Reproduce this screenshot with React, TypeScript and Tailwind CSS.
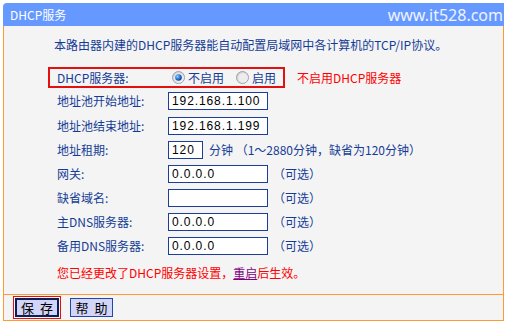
import React from "react";

const CJK = { fontFamily: '"Noto Sans CJK SC", "Noto Sans", sans-serif' };

function Radio({ checked }: { checked: boolean }) {
  const g = checked ? "rg1" : "rg2";
  return (
    <svg width="13" height="13" viewBox="0 0 13 13" className="shrink-0">
      <defs>
        <linearGradient id={g} x1="0" y1="0" x2="1" y2="1">
          <stop offset="0" stopColor="#c4c4c4" />
          <stop offset="1" stopColor="#ffffff" />
        </linearGradient>
        <radialGradient id="dot1" cx="0.35" cy="0.35" r="0.7">
          <stop offset="0" stopColor="#9fd0ff" />
          <stop offset="0.5" stopColor="#2f7fd6" />
          <stop offset="1" stopColor="#0f3f8a" />
        </radialGradient>
      </defs>
      <circle cx="6.5" cy="6.5" r="6" fill={`url(#${g})`} stroke="#98a2ad" strokeWidth="1" />
      <circle cx="6.5" cy="6.5" r="4.3" fill="#ededed" />
      {checked && <circle cx="6.5" cy="6.5" r="3.3" fill="url(#dot1)" />}
    </svg>
  );
}

function Row({
  label,
  value,
  inputW = "w-[100px]",
  after,
}: {
  label: string;
  value: string;
  inputW?: string;
  after?: React.ReactNode;
}) {
  return (
    <div className="flex items-center h-[24px] pl-[53px]">
      <div className="w-[111px] text-[12px] leading-[16px] text-[#143c96]" style={CJK}>
        {label}
      </div>
      <div
        className={`${inputW} h-[18px] border border-[#1d3e98] bg-white flex items-center pl-[3px] text-[12px] tracking-[0.9px] text-black`}
        style={{ fontFamily: '"Liberation Sans", Arial, sans-serif' }}
      >
        {value}
      </div>
      {after}
    </div>
  );
}

const Optional = () => (
  <span className="ml-[5px] text-[12px] leading-[16px] text-[#143c96]" style={CJK}>
    （可选）
  </span>
);

export default function App() {
  return (
    <div className="w-[508px] h-[324px] bg-white pt-[3px] pl-[3px] overflow-hidden">
      <div className="w-[501px]">
        <div className="h-[23px] bg-[#6699ff] rounded-tl-[4px] flex items-center justify-between pl-[7px]">
          <span className="text-[12px] leading-[16px] text-white" style={CJK}>
            DHCP服务
          </span>
          <span
            className="text-[16px] leading-[20px] text-[#eef3ff] pr-[1px]"
            style={{ fontFamily: '"Noto Sans", "Open Sans", sans-serif' }}
          >
            www.it528.com
          </span>
        </div>
        <div className="h-[268px] bg-[#f4f4f4] border-x border-[#ff9933] pt-[11px]">
          <div className="pl-[50px] text-[12px] leading-[16px] text-[#143c96]" style={CJK}>
            本路由器内建的DHCP服务器能自动配置局域网中各计算机的TCP/IP协议。
          </div>
          <div className="flex items-center mt-[14px]">
            <div className="ml-[44px] w-[237px] h-[21px] border-2 border-[#e31010] flex items-center pl-[7px]">
              <div className="w-[115px] text-[12px] leading-[16px] text-[#143c96]" style={CJK}>
                DHCP服务器:
              </div>
              <Radio checked />
              <span className="ml-[3px] text-[12px] leading-[16px] text-[#143c96]" style={CJK}>
                不启用
              </span>
              <span className="ml-[12px] flex">
                <Radio checked={false} />
              </span>
              <span className="ml-[3px] text-[12px] leading-[16px] text-[#143c96]" style={CJK}>
                启用
              </span>
            </div>
            <span className="ml-[12px] text-[12px] leading-[16px] text-[#ff0000]" style={CJK}>
              不启用DHCP服务器
            </span>
          </div>
          <div className="mt-[1px]">
            <Row label="地址池开始地址:" value="192.168.1.100" />
            <div className="h-[1px]" />
            <Row label="地址池结束地址:" value="192.168.1.199" />
            <Row
              label="地址租期:"
              value="120"
              inputW="w-[35px]"
              after={
                <span className="ml-[6px] text-[12px] leading-[16px] text-[#143c96]" style={CJK}>
                  分钟 （1～2880分钟，缺省为120分钟）
                </span>
              }
            />
            <Row label="网关:" value="0.0.0.0" after={<Optional />} />
            <Row label="缺省域名:" value="" after={<Optional />} />
            <Row label="主DNS服务器:" value="0.0.0.0" after={<Optional />} />
            <Row label="备用DNS服务器:" value="0.0.0.0" after={<Optional />} />
          </div>
          <div className="pl-[53px] mt-[7px] text-[12px] leading-[16px] text-[#ff0000]" style={CJK}>
            您已经更改了DHCP服务器设置，
            <span className="text-[#800080] underline">重启</span>
            后生效。
          </div>
        </div>
        <div className="h-[27px] bg-[#f4f4f4] border border-[#ff9933] flex items-center pl-[9px]">
          <div className="border border-[#e31010] p-[1px]">
            <button
              className="w-[44px] h-[19px] bg-[#d2d5f8] border-2 border-[#0d1e55] text-[13px] leading-[15px] text-black flex items-center justify-center gap-[6px]"
              style={CJK}
            >
              <span>保</span>
              <span>存</span>
            </button>
          </div>
          <button
            className="ml-[9px] w-[43px] h-[19px] bg-[#d2d5f8] border border-[#2347a8] text-[13px] leading-[15px] text-black flex items-center justify-center gap-[6px]"
            style={CJK}
          >
            <span>帮</span>
            <span>助</span>
          </button>
        </div>
      </div>
    </div>
  );
}
